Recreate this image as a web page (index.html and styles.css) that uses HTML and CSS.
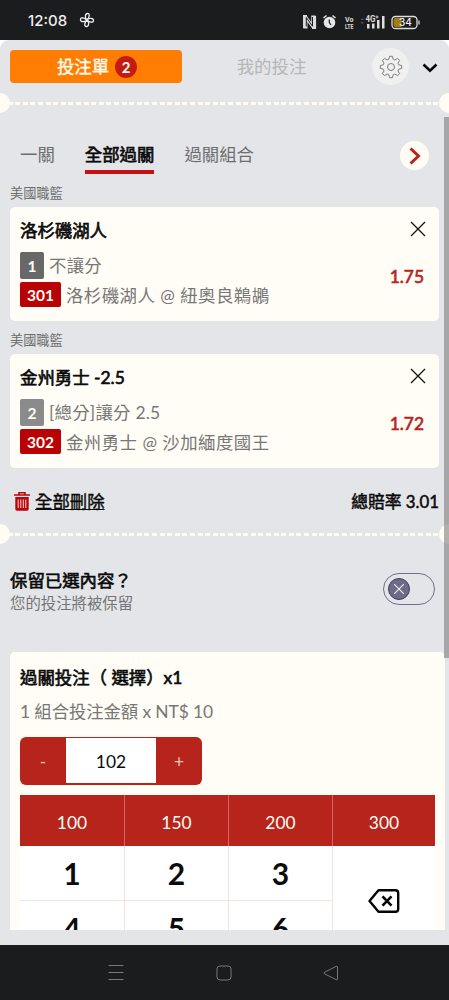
FILE: index.html
```html
<!DOCTYPE html>
<html lang="zh-Hant">
<head>
<meta charset="utf-8">
<title>投注單</title>
<link rel="stylesheet" href="styles.css">
</head>
<body>
<div class="phone">
  <div class="status">
    <span class="clock">12:08</span>
    <svg class="fan" width="16" height="16" viewBox="0 0 16 16" fill="none" stroke="#eee" stroke-width="1.3"><path d="M8 8C5.600 6 5.800 1.500 8.600 1.500C11.200 1.500 10.500 5.500 8 8Z"/><path d="M8 8C10 5.600 14.500 5.800 14.500 8.600C14.500 11.200 10.500 10.500 8 8Z"/><path d="M8 8C10.400 10 10.200 14.500 7.400 14.500C4.800 14.500 5.500 10.500 8 8Z"/><path d="M8 8C6 10.400 1.500 10.200 1.500 7.400C1.500 4.800 5.500 5.500 8 8Z"/></svg>
    <svg class="tray" width="118" height="18" viewBox="0 0 118 18">
      <path d="M.3 2.500H3.500L8.300 9V2.500H12.500V15.500H9.300L4.500 9V15.500H.3Z" fill="#ddd"/>
      <path d="M3.300 13.500V4.500L9.500 13.200V4" fill="none" stroke="#1b1c1e" stroke-width="1"/>
      <path d="M.3 15V2.500H4M12.500 3V15.500H9" fill="none" stroke="#ddd" stroke-width="1.200"/>
      <circle cx="26.500" cy="9.500" r="5.800" fill="#e6e6e6"/><path d="M20.500 5L23.500 2.500M32.500 5L29.500 2.500" stroke="#e6e6e6" stroke-width="1.500"/><path d="M26.300 6.500V9.500L28 12" fill="none" stroke="#1b1c1e" stroke-width="1.200"/>
      <text x="42" y="8.500" class="tiny" textLength="8.500" lengthAdjust="spacingAndGlyphs">Vo</text><text x="42" y="15.500" class="tiny" textLength="8.500" lengthAdjust="spacingAndGlyphs">LTE</text>
      <path d="M57.500 7L59.200 5L61 7ZM57.500 9L59.200 11L61 9Z" fill="#555"/>
      <text x="62.500" y="8.700" class="tiny net" textLength="10" lengthAdjust="spacingAndGlyphs">4G</text><path d="M74 2.500V5.500M72.500 4H75.500" stroke="#ddd" stroke-width=".9"/>
      <path d="M64 11H66.500V15.500H64ZM69 10.500H71.500V15.500H69ZM74 7H76.500V15.500H74ZM79 3H81.500V15.500H79Z" fill="#ddd"/>
      <rect x="89" y="3.500" width="25" height="12" rx="3.500" fill="none" stroke="#ddd" stroke-width="1.300"/><path d="M90.500 7Q90.500 5 92.500 5H98.500V14H92.500Q90.500 14 90.500 12Z" fill="#a57b12"/><path d="M116 7.500V11.500" stroke="#ddd" stroke-width="1.300"/>
      <text x="96" y="13" class="batt">34</text>
    </svg>
  </div>

  <main class="sheet-back"><div class="sheet">
    <header class="top">
      <div class="slip">投注單<b class="count">2</b></div>
      <div class="mine">我的投注</div>
      <div class="gear"><svg width="24" height="24" viewBox="0 0 24 24" fill="none" stroke="#6f6f70" stroke-width=".9"><path d="M9.800 4.300L10.600 1.300H13.400L14.200 4.300Q15.200 4.600 15.900 5L18.600 3.400L20.600 5.400L19 8.100Q19.500 9 19.700 9.800L22.700 10.600V13.400L19.700 14.200Q19.500 15 19 15.900L20.600 18.600L18.600 20.600L15.900 19Q15.200 19.500 14.200 19.700L13.400 22.700H10.600L9.800 19.700Q8.800 19.500 8.100 19L5.400 20.600L3.400 18.600L5 15.900Q4.500 15 4.300 14.200L1.300 13.400V10.600L4.300 9.800Q4.500 9 5 8.100L3.400 5.400L5.400 3.400L8.100 5Q8.800 4.600 9.800 4.300Z"/><circle cx="12" cy="12" r="3.500"/></svg></div>
      <svg class="down" width="16" height="10" viewBox="0 0 16 10"><path d="M1.500 1.500L8 7.700L14.500 1.500" fill="none" stroke="#080808" stroke-width="2.600"/></svg>
    </header>
    <div class="tear"></div>

    <nav class="tabs">
      <span class="tab">一關</span><span class="tab active">全部過關</span><span class="tab">過關組合</span>
      <span class="next"><svg width="12" height="18" viewBox="0 0 12 18"><path d="M1.500 1.500L9.500 9L1.500 16.500" fill="none" stroke="#b6241b" stroke-width="3"/></svg></span>
    </nav>

    <div class="league">美國職籃</div>
    <section class="card">
      <div class="pick"><span>洛杉磯湖人</span><svg width="16" height="16" viewBox="0 0 16 16"><path d="M1 1L15 15M15 1L1 15" stroke="#111" stroke-width="1.300"/></svg></div>
      <div class="line one"><b class="tag dark">1</b><span>不讓分</span></div>
      <div class="line two"><b class="tag red">301</b><span>洛杉磯湖人 @ 紐奧良鵜鶘</span></div>
      <div class="odds">1.75</div>
    </section>
    <div class="league second">美國職籃</div>
    <section class="card">
      <div class="pick"><span>金州勇士 -2.5</span><svg width="16" height="16" viewBox="0 0 16 16"><path d="M1 1L15 15M15 1L1 15" stroke="#111" stroke-width="1.300"/></svg></div>
      <div class="line one"><b class="tag mid">2</b><span>[總分]讓分 2.5</span></div>
      <div class="line two"><b class="tag red">302</b><span>金州勇士 @ 沙加緬度國王</span></div>
      <div class="odds">1.72</div>
    </section>

    <div class="summary">
      <svg width="16" height="19" viewBox="0 0 16 19"><path d="M0 3H16M5 2.500V.8H11V2.500" fill="none" stroke="#b80609" stroke-width="1.600"/><path d="M1.300 5H14.700V17Q14.700 18.800 13 18.800H3Q1.300 18.800 1.300 17Z" fill="#b80609"/><path d="M4.200 7.500V16M6.800 7.500V16M9.300 7.500V16M11.800 7.500V16" stroke="#f0d8d6" stroke-width="1"/></svg>
      <u>全部刪除</u><span class="total">總賠率 3.01</span>
    </div>
    <div class="tear"></div>

    <div class="keep">
      <div><div class="keep-title">保留已選內容？</div><div class="keep-sub">您的投注將被保留</div></div>
      <div class="switch"><span class="knob"><svg width="10" height="10" viewBox="0 0 10 10"><path d="M0 0L10 10M10 0L0 10" stroke="#eee" stroke-width="1.100"/></svg></span></div>
    </div>

    <section class="stake">
      <div class="stake-title">過關投注（ 選擇）x1</div>
      <div class="stake-sub">1 組合投注金額 x NT$ 10</div>
      <div class="stepper"><span>-</span><span class="value">102</span><span>+</span></div>
      <div class="pad">
        <div class="quick">100</div><div class="quick">150</div><div class="quick">200</div><div class="quick">300</div>
        <div class="key">1</div><div class="key">2</div><div class="key">3</div>
        <div class="key erase"><svg width="32" height="24" viewBox="0 0 32 24" fill="none" stroke="#050505"><path d="M10.500 1.200H27.500Q30.200 1.200 30.200 4V20Q30.200 22.800 27.500 22.800H10.500L1.500 12Z" stroke-width="2.400" stroke-linejoin="round"/><path d="M14.500 7.300L23.500 16.700M23.500 7.300L14.500 16.700" stroke-width="2.600"/></svg></div>
        <div class="key">4</div><div class="key">5</div><div class="key">6</div>
      </div>
    </section>
    <i class="scrollbar"></i>
  </div></main>
  <div class="strip"></div>
  <div class="navbar">
    <svg width="16" height="16" viewBox="0 0 16 16"><path d="M.5 .5H15.500M.5 7.500H15.500M.5 14.500H15.500" stroke="#77787a" stroke-width="1"/></svg>
    <svg width="16" height="16" viewBox="0 0 16 16"><rect x="1" y="1" width="14" height="14" rx="3" fill="none" stroke="#77787a"/></svg>
    <svg width="16" height="16" viewBox="0 0 16 16"><path d="M13.300 1.300Q14.500 .8 14.500 2V14Q14.500 15.200 13.300 14.700L1.500 8.800Q.3 8 1.500 7.200Z" fill="none" stroke="#77787a"/></svg>
  </div>
</div>
</body>
</html>
```
FILE: styles.css
```css
* { box-sizing: border-box; }
body { margin: 0; background: #1b1c1e; font: 17.4px/24px Lato, "Noto Sans CJK TC", sans-serif; color: #0b0b0b; }
svg { display: block; flex: none; }
.phone { width: 449px; height: 1000px; display: flex; flex-direction: column; overflow: hidden; }
.status { height: 40px; flex: none; display: flex; align-items: center; padding-left: 28px; color: #eee; }
.clock { width: 41px; margin-top: 2px; font: 500 15px/20px Inter, sans-serif; white-space: nowrap; }
.fan { margin-left: 10px; }
.tray { margin-left: 208px; margin-top: 4px; }
.tiny { font: 700 7.500px Roboto, sans-serif; fill: #ddd; }
.net { font-size: 8.500px; }
.batt { font: 500 10px Inter, sans-serif; fill: #eee; }
.sheet-back { height: 890px; flex: none; background: #fff; }
.sheet { position: relative; height: 890px; overflow: hidden; background: #e4e5e8; border-radius: 9px 9px 0 0; }
.top { height: 53px; display: flex; align-items: center; padding: 0 11px 0 10px; }
.slip { width: 172px; height: 33px; border-radius: 4px; background: #ff7d03; color: #fffdf2; display: flex; align-items: center; justify-content: center; -webkit-text-stroke: .3px; padding-left: 2px; }
.count { width: 22px; height: 22px; margin-left: 6px; border-radius: 50%; background: #c41c13; font-size: 15px; font-weight: 700; line-height: 22px; text-align: center; -webkit-text-stroke: 0; }
.mine { width: 179px; text-align: center; color: #b5b6b8; }
.gear { width: 37px; height: 37px; margin-left: 11px; border-radius: 50%; background: #f0f0f0; display: grid; place-items: center; }
.down { margin-left: 13px; margin-top: 2px; }
.tear { position: relative; height: 20px; display: flex; align-items: center; justify-content: space-between; overflow: hidden; background: repeating-linear-gradient(90deg, #fffdf3 0 5px, transparent 5px 7.600px) 0 9px / 100% 3px no-repeat; }
.tear::before, .tear::after { content: ""; width: 10px; height: 20px; background: #fffdf3; border-radius: 0 10px 10px 0; }
.tear::after { border-radius: 10px 0 0 10px; }
.tabs { height: 61px; margin-top: 10px; padding: 19px 20px 0; display: flex; gap: 30px; color: #6d6e70; }
.tab { height: 32px; line-height: 26px; }
.active, .pick, .keep-title, .stake-title { color: #0b0b0b; -webkit-text-stroke: .65px; }
.active { border-bottom: 4px solid #c51114; }
.next { width: 29px; height: 29px; margin: -1px 0 0 auto; border-radius: 50%; background: #fffdf3; display: grid; place-items: center; }
.league { height: 23px; padding-left: 10px; font-size: 13.200px; line-height: 19px; color: #6d6e70; }
.second { height: 33px; padding-top: 10px; }
.card { position: relative; height: 114px; margin: 0 10px; padding: 12px 13px 0 10px; border-radius: 5px; background: #fffdf5; }
.pick { height: 32px; display: flex; justify-content: space-between; align-items: flex-start; }
.pick svg { margin-top: 2px; }
.line { display: flex; align-items: center; color: #777; white-space: nowrap; height: 31px; }
.line span { padding-top: 2px; letter-spacing: .25px; }
.two { height: 25px; }
.two span { letter-spacing: .48px; }
.one { height: 28px; margin-bottom: 3px; }
.tag { height: 27px; width: 24px; margin-right: 5px; border-radius: 2px; color: #fffdf3; font-size: 15.500px; line-height: 29px; text-align: center; }
.dark { background: #686868; }
.mid { background: #8b8b8b; }
.red { width: 41px; height: 25px; background: #b80205; line-height: 27px; }
.odds { position: absolute; right: 15px; top: 58px; color: #b6241b; -webkit-text-stroke: .65px; }
.summary { height: 56px; padding: 22px 10px 0 14px; display: flex; align-items: flex-start; -webkit-text-stroke: .4px; }
.summary svg { margin-top: 2px; }
.summary u { margin-left: 5px; }
.total { margin-left: auto; font-size: 16.800px; -webkit-text-stroke: .5px; }
.keep { height: 108px; padding: 25px 14px 0 10px; display: flex; justify-content: space-between; }
.keep-sub { font-size: 15.400px; line-height: 20px; color: #747577; }
.switch { width: 52px; height: 32px; margin-top: 4px; border: 1px solid #716f89; border-radius: 16px; padding: 4px; }
.knob { width: 22px; height: 22px; border: 1px solid #3f3d60; border-radius: 50%; background: #6d6b87; display: grid; place-items: center; }
.stake { margin-left: 10px; width: 435px; height: 300px; padding: 14px 10px 0; border-radius: 5px 5px 0 0; background: #fffdf5; }
.stake-sub { margin-top: 10px; color: #777; letter-spacing: -.1px; }
.stepper { margin-top: 13px; width: 182px; height: 48px; display: flex; border-radius: 6px; background: #b6241b; color: #e8c4bd; line-height: 50px; text-align: center; overflow: hidden; }
.stepper span { flex: 1; }
.stepper .value { flex: 0 0 90px; height: 45px; margin-top: 1px; background: #fff; color: #0b0b0b; line-height: 47px; }
.pad { margin-top: 10px; width: 415px; display: grid; grid-template-columns: 105px 104px 104px 102px; grid-template-rows: 51px 55px 55px; background: #fff; }
.quick { background: #b6241b; color: #fffdf5; line-height: 55px; text-align: center; border-right: 1px solid #cf6a62; }
.key { border-right: 1px solid #f5e1e1; border-bottom: 1px solid #f5e1e1; text-align: center; font-size: 30px; font-weight: 700; line-height: 55px; }
.quick:nth-child(4), .erase { border-right: 0; }
.erase { grid-column: 4; grid-row: 2 / 4; display: grid; place-items: center; }
.scrollbar { position: absolute; right: 0; top: 77px; width: 5px; height: 541px; background: rgba(120, 121, 122, .58); }
.strip { height: 15px; flex: none; background: #e4e5e7; }
.navbar { height: 55px; flex: none; display: flex; justify-content: space-between; align-items: center; padding: 0 110px 0 108px; }
```
